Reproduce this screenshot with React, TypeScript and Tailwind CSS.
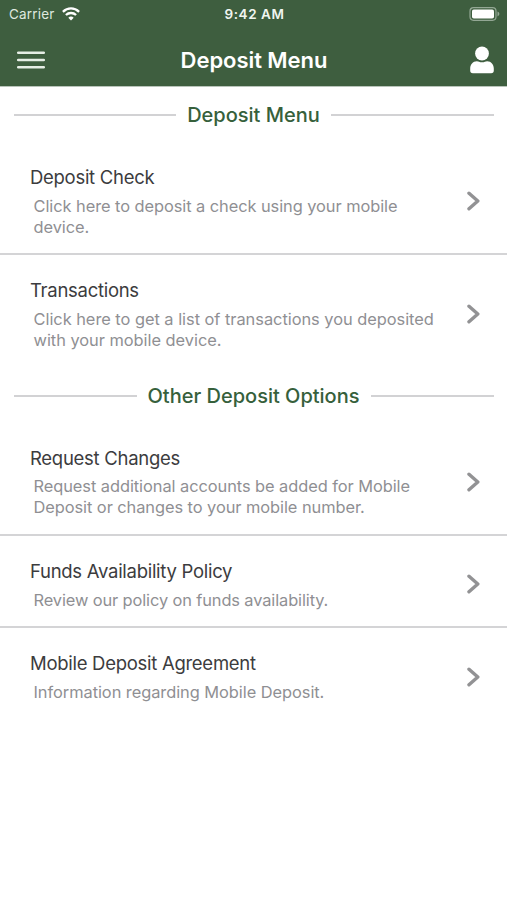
type Item = { title: string; lines: string[]; lineClass: string; rowClass: string };

function Chevron() {
  return (
    <svg className="mt-1.5 h-[20px] w-[14px] shrink-0" viewBox="0 0 14 20" fill="none" stroke="#929294" strokeWidth="3.4">
      <path d="M2 2.2 L10.8 10 L2 17.8" strokeLinejoin="round" strokeLinecap="round" />
    </svg>
  );
}

function Row({ item }: { item: Item }) {
  return (
    <li className={`flex items-center justify-between pr-[26px] pl-[30px] ${item.rowClass}`}>
      <div className="h-full pt-[23px] whitespace-nowrap">
        <div className="text-[18.5px] leading-6 tracking-[-0.28px] text-[#3c3c3e]">{item.title}</div>
        <div className={`pl-[3.5px] text-[16.4px] leading-[21px] text-[#8f8f93] ${item.lineClass}`}>
          {item.lines.map((line) => (
            <div key={line}>{line}</div>
          ))}
        </div>
      </div>
      <Chevron />
    </li>
  );
}

function Heading({ text }: { text: string }) {
  return (
    <div className="flex h-14 items-center gap-[11px] px-[13.5px]">
      <div className="mt-0.5 h-[2px] flex-1 bg-[#d2d2d4]" />
      <h2 className="mt-px text-[20px] leading-7 font-medium whitespace-nowrap text-[#36603b]">{text}</h2>
      <div className="mt-0.5 h-[2px] flex-1 bg-[#d2d2d4]" />
    </div>
  );
}

const depositItems: Item[] = [
  {
    title: "Deposit Check",
    lines: ["Click here to deposit a check using your mobile", "device."],
    lineClass: "mt-[7px] tracking-[-0.06px]",
    rowClass: "h-[113px] border-b-2 border-[#d4d4d6]",
  },
  {
    title: "Transactions",
    lines: ["Click here to get a list of transactions you deposited", "with your mobile device."],
    lineClass: "mt-[7px] tracking-[-0.03px]",
    rowClass: "h-[112px]",
  },
];

const otherItems: Item[] = [
  {
    title: "Request Changes",
    lines: ["Request additional accounts be added for Mobile", "Deposit or changes to your mobile number."],
    lineClass: "mt-1.5 tracking-[-0.06px]",
    rowClass: "h-[113px] border-b-2 border-[#d4d4d6]",
  },
  {
    title: "Funds Availability Policy",
    lines: ["Review our policy on funds availability."],
    lineClass: "mt-[7px] tracking-[-0.11px]",
    rowClass: "h-[92px] border-b-2 border-[#d4d4d6]",
  },
  {
    title: "Mobile Deposit Agreement",
    lines: ["Information regarding Mobile Deposit."],
    lineClass: "mt-[7px] tracking-[-0.05px]",
    rowClass: "h-[92px]",
  },
];

export default function App() {
  return (
    <div className="h-[900px] w-[507px] overflow-hidden bg-white font-['Inter','Liberation_Sans',sans-serif]">
      <header className="h-[87px] border-b border-[#b9c4ba] bg-[#3e5e3f] text-white">
        <div className="grid h-[27px] grid-cols-3 items-center pr-[7px] pl-[9px] text-[13.5px]">
          <div className="flex items-center gap-[7px]">
            <span className="mt-px tracking-[0.2px] text-[#dfe8df]">Carrier</span>
            <svg className="h-[14px] w-[18px]" viewBox="0 0 18 14" fill="none" stroke="white" strokeWidth="2.3">
              <path d="M0.9 4.8 C5.6 0.3 12.4 0.3 17.1 4.8" />
              <path d="M3.9 8 C6.8 5.3 11.2 5.3 14.1 8" />
              <path d="M6.3 10.8 Q9 8.4 11.7 10.8 L9 13.5 Z" fill="white" stroke="none" />
            </svg>
          </div>
          <span className="mt-px text-center font-semibold tracking-[0.55px] whitespace-nowrap text-[#f0f5f0]">9:42 AM</span>
          <svg className="h-[14px] w-[31px] justify-self-end" viewBox="0 0 31 14">
            <rect x="1" y="0.7" width="26" height="12.6" rx="3.5" fill="none" stroke="#93a794" strokeWidth="1.2" />
            <rect x="3" y="2.5" width="22" height="9" rx="1.8" fill="white" />
            <path d="M28.5 4.6 C31 5.5 31 8.5 28.5 9.4 Z" fill="#93a794" />
          </svg>
        </div>
        <div className="grid h-[59px] grid-cols-[60px_1fr_60px] items-center pt-[7px] pr-[13px] pl-[17px]">
          <svg className="h-[18px] w-[28px]" viewBox="0 0 28 18" stroke="#e6eee6" strokeWidth="2.5" strokeLinecap="round">
            <path d="M1.2 1.8 H26.8 M1.2 9 H26.8 M1.2 16.2 H26.8" />
          </svg>
          <h1 className="mr-[3px] text-center text-[22px] leading-7 font-semibold tracking-[-0.05px] whitespace-nowrap">Deposit Menu</h1>
          <svg className="h-[28px] w-[24px] justify-self-end" viewBox="0 0 24 28" fill="white">
            <circle cx="12" cy="7.5" r="6.9" />
            <path d="M6.9 15.2 C8.6 15.2 9.4 16.3 12 16.3 S15.4 15.2 17.1 15.2 C21.2 15.2 23.8 18.5 23.8 22.5 V24.6 Q23.8 27.3 21.2 27.3 H2.8 Q0.2 27.3 0.2 24.6 V22.5 C0.2 18.5 2.8 15.2 6.9 15.2Z" />
          </svg>
        </div>
      </header>
      <main className="-mt-px">
        <Heading text="Deposit Menu" />
        <ul>{depositItems.map((item) => <Row key={item.title} item={item} />)}</ul>
        <Heading text="Other Deposit Options" />
        <ul>{otherItems.map((item) => <Row key={item.title} item={item} />)}</ul>
      </main>
    </div>
  );
}
